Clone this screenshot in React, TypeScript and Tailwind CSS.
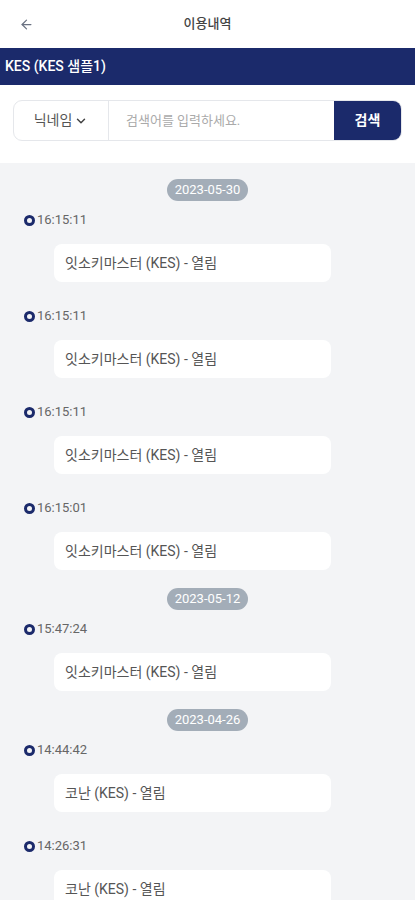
import { ArrowLeft, ChevronDown } from 'lucide-react';

type Entry = { time: string; text: string };
type Group = { date: string; entries: Entry[] };

const groups: Group[] = [
  {
    date: '2023-05-30',
    entries: [
      { time: '16:15:11', text: '잇소키마스터 (KES) - 열림' },
      { time: '16:15:11', text: '잇소키마스터 (KES) - 열림' },
      { time: '16:15:11', text: '잇소키마스터 (KES) - 열림' },
      { time: '16:15:01', text: '잇소키마스터 (KES) - 열림' },
    ],
  },
  {
    date: '2023-05-12',
    entries: [{ time: '15:47:24', text: '잇소키마스터 (KES) - 열림' }],
  },
  {
    date: '2023-04-26',
    entries: [
      { time: '14:44:42', text: '코난 (KES) - 열림' },
      { time: '14:26:31', text: '코난 (KES) - 열림' },
    ],
  },
];

export default function App() {
  return (
    <div
      className="w-[415px] h-[900px] overflow-hidden bg-[#f3f4f6]"
      style={{ fontFamily: 'Roboto, "Noto Sans CJK KR", sans-serif' }}
    >
      <div className="bg-white">
        {/* Header */}
        <div className="relative flex h-[48px] items-center justify-center">
          <ArrowLeft className="absolute left-[19px] top-[17px] size-[15px] text-gray-500" strokeWidth={2} />
          <span className="text-[13px] font-medium text-[#444]">이용내역</span>
        </div>

        <div className="flex h-[37px] items-center bg-[#1b2a6b] px-[5px] text-[14px] font-medium text-white">
          KES (KES 샘플1)
        </div>

        {/* Search */}
        <div className="px-[13px] pt-[15px] pb-[22px]">
          <div className="flex h-[41px] overflow-hidden rounded-[9px] border border-[#e5e7eb]">
            <div className="flex w-[95px] items-center justify-center gap-[2px] border-r border-[#e5e7eb] text-[14px] text-[#555]">
              닉네임
              <ChevronDown className="size-[14px] text-[#444]" strokeWidth={2.5} />
            </div>
            <div className="flex flex-1 items-center pl-[17px] text-[13px] text-[#aaa]">검색어를 입력하세요.</div>
            <div className="flex w-[67px] items-center justify-center bg-[#1b2a6b] text-[14px] font-bold text-white">
              검색
            </div>
          </div>
        </div>
      </div>

      {/* List */}
      <div className="pt-[16px]">
        {groups.map((g) => (
          <div key={g.date} className="mb-[18px]">
            <div className="flex justify-center">
              <span className="flex h-[22px] items-center rounded-full bg-[#a3adb8] px-[8px] text-[13px] text-white">
                {g.date}
              </span>
            </div>
            {g.entries.map((e, i) => (
              <div key={i} className={i === 0 ? 'mt-[11px]' : 'mt-[26px]'}>
                <div className="flex h-[16px] items-center pl-[24px]">
                  <span className="size-[11px] rounded-full border-[3px] border-[#1b2a6b]" />
                  <span className="ml-[2px] text-[13px] text-[#666]">{e.time}</span>
                </div>
                <div className="ml-[54px] mt-[16px] flex h-[38px] w-[277px] items-center rounded-[8px] bg-white pl-[11px] text-[14px] text-[#555]">
                  {e.text}
                </div>
              </div>
            ))}
          </div>
        ))}
      </div>
    </div>
  );
}
